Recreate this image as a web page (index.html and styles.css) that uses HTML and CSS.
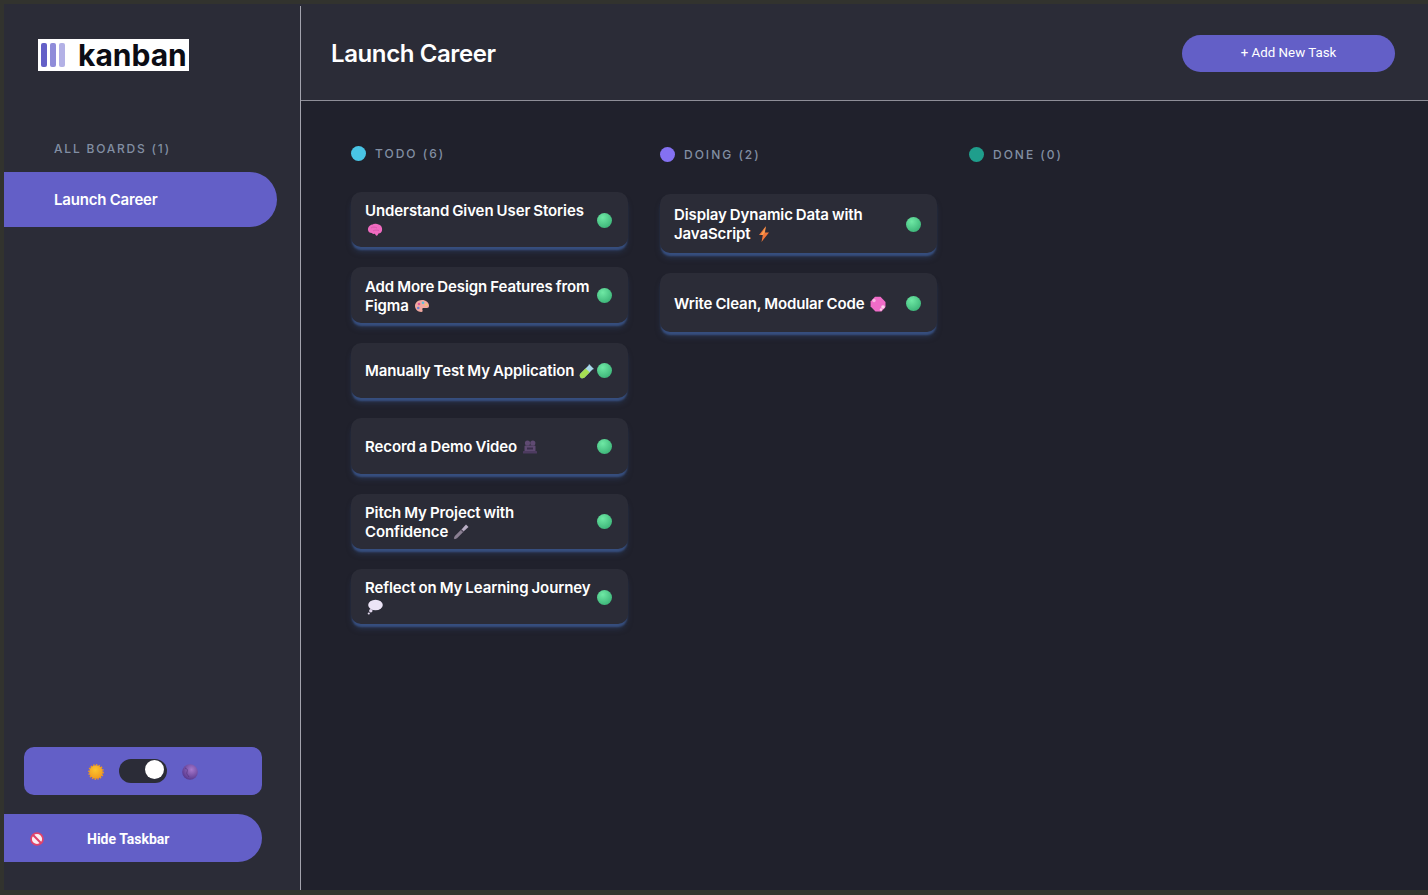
FILE: index.html
```html
<!DOCTYPE html>
<html>
<head>
  <meta charset="utf-8">
  <title>Kanban Task Manager</title>
  <link rel="stylesheet" href="styles.css">
</head>
<body>
  <svg class="defs" width="0" height="0">
    <defs>
      <radialGradient id="green" cx="38%" cy="30%" r="75%">
        <stop offset="0" stop-color="#6ee8a4"/>
        <stop offset="1" stop-color="#3cb478"/>
      </radialGradient>
      <radialGradient id="sun" cx="45%" cy="35%" r="70%">
        <stop offset="0" stop-color="#fcc52f"/>
        <stop offset="1" stop-color="#f0961c"/>
      </radialGradient>
      <radialGradient id="planet" cx="60%" cy="35%" r="65%">
        <stop offset="0" stop-color="#a678cc"/>
        <stop offset="1" stop-color="#5a3a90"/>
      </radialGradient>
      <symbol id="brain" viewBox="0 0 16 16">
        <path d="M1 8c-.4-3 2-5.500 5-5.500 1-.8 4-.9 5.500 0C14 3 15.600 5.500 15 8.500c-.3 2-1.800 3-3.500 3-.5 1-1 2.300-1.800 2.300-1 0-1.200-1.300-2-2-1 .3-2.200 0-3-.8C2.500 11 1.300 10 1 8z" fill="#f06bc0"/>
        <path d="M4 6c2-1.500 4-1 6 0M6 9c1.500-1 4-1 6-.5" stroke="#d85aae" stroke-width="1" fill="none"/>
      </symbol>
      <symbol id="palette" viewBox="0 0 16 16">
        <path d="M8 2C3.800 2 1 4.800 1 8s2.800 6 6.200 6c1.800 0 1.600-1.500 1.200-2.300-.4-1 .2-1.700 1.200-1.700H13c1.300 0 2-1 2-2.300C15 4.500 12 2 8 2z" fill="#f2a8a0"/>
        <circle cx="5" cy="6" r="1.300" fill="#e0569a"/>
        <circle cx="9" cy="4.800" r="1.300" fill="#5cc0d8"/>
        <circle cx="4.300" cy="10" r="1.300" fill="#6a7fd0"/>
        <circle cx="12.300" cy="6.800" r="1.100" fill="#f2d060"/>
      </symbol>
      <symbol id="tube" viewBox="0 0 16 16">
        <path d="M10 1l5 5-1.500.6L5.500 14.500c-1.200 1.200-3 1-4-.1-1-1-1.100-2.700 0-3.900l8-8z" fill="#a8d8ea"/>
        <path d="M6.500 5.500l4.200 3.800-5.200 5.200c-1.200 1.200-3 1-4-.1-1-1-1.100-2.700 0-3.900z" fill="#a5df52"/>
      </symbol>
      <symbol id="camera" viewBox="0 0 16 16">
        <circle cx="5.500" cy="4" r="2.600" fill="#5f4a72"/>
        <circle cx="10.800" cy="4" r="2.600" fill="#5f4a72"/>
        <rect x="2.500" y="6.500" width="11" height="6" rx="1" fill="#5f4a72"/>
        <rect x="1" y="12" width="14" height="2.500" rx=".6" fill="#4d3b60"/>
        <rect x="5" y="8.500" width="6" height="2" fill="#3b2e4c"/>
      </symbol>
      <symbol id="mic" viewBox="0 0 16 16">
        <path d="M.8 14.200l1-2.200 6-6 2.200 2.200-6 6-2.200 1z" fill="#8a7f92"/>
        <path d="M8.500 5.500l2 2L15.500 3 13 .5z" fill="#b9aec4"/>
        <path d="M8 5.500l2.500 2.500" stroke="#5f5568" stroke-width="1.200"/>
      </symbol>
      <symbol id="bubble" viewBox="0 0 16 16">
        <ellipse cx="8.500" cy="6" rx="7.300" ry="5.200" fill="#ece4f6"/>
        <circle cx="3.800" cy="11.800" r="1.700" fill="#e2d8ee"/>
        <circle cx="1.800" cy="14.500" r="1.100" fill="#e2d8ee"/>
      </symbol>
      <symbol id="bolt" viewBox="0 0 16 16">
        <path d="M9.800 .2L3 9h3.800L5.500 16 13 6.500H9z" fill="#f0763a"/>
        <path d="M9.800 .2L5 9h1.800L8.500 6.500z" fill="#f6a253"/>
      </symbol>
      <symbol id="soap" viewBox="0 0 16 16">
        <path d="M5 .8h5.500L15.500 6v5l-4 4.500H5.500L.6 10.500V5.500z" fill="#f06cc8"/>
        <circle cx="4" cy="4.500" r="1.700" fill="#f9b8e2"/>
        <circle cx="13" cy="11" r="1.800" fill="#fbd0ea"/>
        <circle cx="11" cy="13.500" r="1.200" fill="#fbd0ea"/>
      </symbol>
      <symbol id="noentry" viewBox="0 0 16 16">
        <circle cx="8" cy="8" r="6.800" fill="#fbeff3" stroke="#e0436a" stroke-width="2"/>
        <path d="M3.500 3.500l9 9" stroke="#e0436a" stroke-width="2.400"/>
      </symbol>
    </defs>
  </svg>

  <div class="app">
    <aside class="sidebar">
      <div class="logo">
        <span class="logo-bars"><i></i><i></i><i></i></span>
        <span class="logo-text">kanban</span>
      </div>
      <h4 class="boards-title">ALL BOARDS (1)</h4>
      <div class="board-link">Launch Career</div>

      <div class="theme-box">
        <svg class="theme-icon" viewBox="0 0 16 16">
          <circle cx="8" cy="8" r="7.200" fill="none" stroke="#f0961c" stroke-width="1.400" stroke-dasharray="1.500 1.300"/>
          <circle cx="8" cy="8" r="6.800" fill="url(#sun)"/>
        </svg>
        <div class="toggle"><span class="knob"></span></div>
        <svg class="theme-icon" viewBox="0 0 16 16">
          <circle cx="8" cy="8" r="7.800" fill="url(#planet)"/>
          <path d="M3 4c2 .5 3 2 2 4s1 3 2 5" stroke="#4b2e78" fill="none" opacity=".6"/>
        </svg>
      </div>
      <div class="hide-bar">
        <svg class="hide-icon"><use href="#noentry"/></svg>
        <span>Hide Taskbar</span>
      </div>
    </aside>
    <div class="divider"></div>

    <div class="content">
      <header class="topbar">
        <h1 class="board-name">Launch Career</h1>
        <button class="add-btn">+ Add New Task</button>
      </header>

      <main class="board">
        <section class="column column-todo">
          <h3 class="column-title"><span class="dot dot-todo"></span>TODO (6)</h3>
          <div class="card"><p>Understand Given User Stories <svg class="emoji"><use href="#brain"/></svg></p><svg class="status" viewBox="0 0 16 16"><circle cx="8" cy="8" r="8" fill="url(#green)"/></svg></div>
          <div class="card"><p>Add More Design Features from Figma <svg class="emoji"><use href="#palette"/></svg></p><svg class="status" viewBox="0 0 16 16"><circle cx="8" cy="8" r="8" fill="url(#green)"/></svg></div>
          <div class="card"><p>Manually Test My Application <svg class="emoji"><use href="#tube"/></svg></p><svg class="status" viewBox="0 0 16 16"><circle cx="8" cy="8" r="8" fill="url(#green)"/></svg></div>
          <div class="card"><p>Record a Demo Video <svg class="emoji"><use href="#camera"/></svg></p><svg class="status" viewBox="0 0 16 16"><circle cx="8" cy="8" r="8" fill="url(#green)"/></svg></div>
          <div class="card"><p>Pitch My Project with Confidence <svg class="emoji"><use href="#mic"/></svg></p><svg class="status" viewBox="0 0 16 16"><circle cx="8" cy="8" r="8" fill="url(#green)"/></svg></div>
          <div class="card"><p>Reflect on My Learning Journey <svg class="emoji"><use href="#bubble"/></svg></p><svg class="status" viewBox="0 0 16 16"><circle cx="8" cy="8" r="8" fill="url(#green)"/></svg></div>
        </section>

        <section class="column">
          <h3 class="column-title"><span class="dot dot-doing"></span>DOING (2)</h3>
          <div class="card"><p>Display Dynamic Data with JavaScript <svg class="emoji"><use href="#bolt"/></svg></p><svg class="status" viewBox="0 0 16 16"><circle cx="8" cy="8" r="8" fill="url(#green)"/></svg></div>
          <div class="card"><p>Write Clean, Modular Code <svg class="emoji"><use href="#soap"/></svg></p><svg class="status" viewBox="0 0 16 16"><circle cx="8" cy="8" r="8" fill="url(#green)"/></svg></div>
        </section>

        <section class="column">
          <h3 class="column-title"><span class="dot dot-done"></span>DONE (0)</h3>
        </section>
      </main>
    </div>
  </div>
</body>
</html>
```

FILE: styles.css
```css
* {
  box-sizing: border-box;
}

html, body {
  height: 100%;
}

body {
  margin: 0;
  padding: 4px 0 5px 4px;
  overflow: hidden;
  font-family: Inter, 'Liberation Sans', sans-serif;
  color: #fff;
  background-color: #32332e;
}

.defs {
  display: block;
  height: 0;
}

.app {
  display: flex;
  height: 100%;
  background-color: #2b2c37;
}

/* sidebar */
.sidebar {
  display: flex;
  flex-direction: column;
  width: 296px;
  flex: none;
  padding-bottom: 28px;
}

.divider {
  width: 1px;
  flex: none;
  margin-top: 2px;
  background-color: #a3a3ad;
}

.logo {
  display: flex;
  align-items: center;
  align-self: flex-start;
  width: 151px;
  height: 32px;
  margin: 35px 0 0 34px;
  padding-left: 3px;
  background-color: #fff;
}

.logo-bars {
  display: flex;
  gap: 3px;
  margin-right: 13px;
}

.logo-bars i {
  display: block;
  width: 6px;
  height: 24px;
  border-radius: 2px;
  background-color: #635fc7;
}

.logo-bars i:nth-child(2) {
  background-color: #8f8cd9;
}

.logo-bars i:nth-child(3) {
  background-color: #b3b1e6;
}

.logo-text {
  font-size: 30px;
  line-height: 32px;
  font-weight: 700;
  color: #0b0c14;
}

.boards-title {
  margin: 70px 0 0 50px;
  font-size: 12px;
  line-height: 15px;
  font-weight: 500;
  letter-spacing: 1.8px;
  color: #828fa3;
}

.board-link {
  display: flex;
  align-items: center;
  width: 273px;
  height: 55px;
  margin-top: 16px;
  padding-left: 50px;
  font-size: 15px;
  font-weight: 600;
  letter-spacing: -.2px;
  background-color: #635fc7;
  border-radius: 0 28px 28px 0;
}

.theme-box {
  display: flex;
  align-items: center;
  justify-content: center;
  gap: 15px;
  width: 238px;
  height: 48px;
  margin: auto 0 19px 20px;
  background-color: #635fc7;
  border-radius: 10px;
}

.theme-icon {
  width: 16px;
  height: 16px;
  margin-top: 2px;
}

.toggle {
  display: flex;
  justify-content: flex-end;
  width: 48px;
  height: 24px;
  padding: 1px 3px;
  background-color: #2b2c37;
  border-radius: 12px;
}

.knob {
  width: 19px;
  height: 19px;
  background-color: #fff;
  border-radius: 50%;
}

.hide-bar {
  display: flex;
  align-items: center;
  width: 258px;
  height: 48px;
  padding: 2px 0 0 26px;
  font-family: Roboto, sans-serif;
  font-size: 14px;
  font-weight: 700;
  background-color: #635fc7;
  border-radius: 0 24px 24px 0;
}

.hide-icon {
  width: 14px;
  height: 14px;
  margin-right: 43px;
}

/* main area */
.content {
  display: flex;
  flex-direction: column;
  flex: 1;
  min-width: 0;
}

.topbar {
  display: flex;
  align-items: center;
  justify-content: space-between;
  height: 97px;
  padding: 3px 33px 0 30px;
  border-bottom: 1px solid #8e8e98;
}

.board-name {
  margin: 0;
  font-size: 24px;
  font-weight: 600;
  letter-spacing: -.4px;
}

.add-btn {
  width: 213px;
  height: 37px;
  padding: 0 0 3px;
  font-family: Roboto, sans-serif;
  font-size: 13.33px;
  font-weight: 400;
  color: #fff;
  background-color: #635fc7;
  border: none;
  border-radius: 19px;
}

.board {
  display: flex;
  flex: 1;
  gap: 32px;
  padding: 45px 50px 0;
  background-color: #20212c;
}

.column {
  width: 277px;
  flex: none;
  padding-top: 1px;
}

.column-todo {
  padding-top: 0;
}

.column-title {
  display: flex;
  align-items: center;
  height: 15px;
  margin: 0 0 32px;
  font-size: 12px;
  font-weight: 500;
  letter-spacing: 2px;
  color: #828fa3;
}

.column-todo .column-title {
  margin-bottom: 31px;
}

.dot {
  width: 15px;
  height: 15px;
  margin-right: 9px;
  border-radius: 50%;
}

.dot-todo {
  background-color: #49c4e5;
}

.dot-doing {
  background-color: #8471f2;
}

.dot-done {
  background-color: #1f9e8c;
}

.card {
  display: flex;
  align-items: center;
  height: 59px;
  margin-bottom: 20px;
  padding: 1px 16px 0 14px;
  background-color: #2b2c37;
  border-radius: 10px;
  box-shadow: 0 4px 2px -1px #364e7e, 0 6px 6px -2px rgba(54, 78, 126, .5);
}

.column-todo .card {
  height: 55.4px;
}

.card p {
  flex: 1;
  margin: 0;
  font-size: 15px;
  line-height: 19px;
  font-weight: 600;
  letter-spacing: -.1px;
  word-spacing: -.6px;
}

.emoji {
  width: 16px;
  height: 16px;
  margin-left: 2px;
  vertical-align: -3px;
}

.status {
  width: 15px;
  height: 15px;
  flex: none;
}
```
